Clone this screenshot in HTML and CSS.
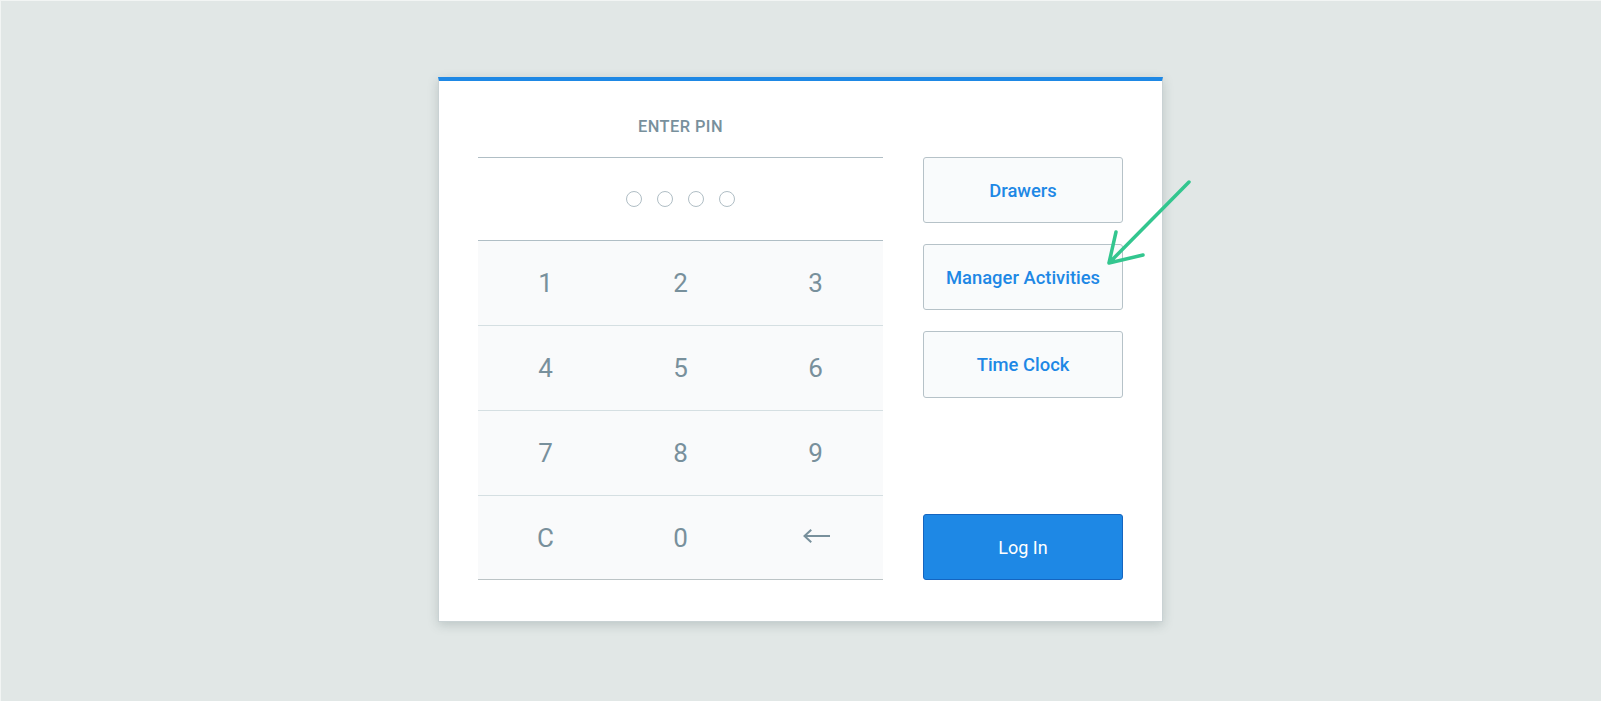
FILE: index.html
```html
<!DOCTYPE html>
<html lang="en">
<head>
<meta charset="utf-8">
<title>Enter PIN</title>
<link rel="stylesheet" href="styles.css">
</head>
<body>
<div class="stage">
  <div class="card">
    <div class="left">
      <div class="title">ENTER PIN</div>
      <div class="pin">
        <span class="dot"></span><span class="dot"></span><span class="dot"></span><span class="dot"></span>
      </div>
      <div class="keypad">
        <div class="row"><div class="key">1</div><div class="key">2</div><div class="key">3</div></div>
        <div class="row"><div class="key">4</div><div class="key">5</div><div class="key">6</div></div>
        <div class="row"><div class="key">7</div><div class="key">8</div><div class="key">9</div></div>
        <div class="row"><div class="key">C</div><div class="key">0</div><div class="key">
          <svg class="back" width="28" height="16" viewBox="0 0 28 16"><path d="M27 8H3M8.5 2.5L2.5 8L8.5 13.5" fill="none" stroke="#78909c" stroke-width="2" stroke-linecap="square"/></svg>
        </div></div>
      </div>
    </div>
    <div class="right">
      <div class="btn">Drawers</div>
      <div class="btn">Manager Activities</div>
      <div class="btn tall">Time Clock</div>
      <div class="login">Log In</div>
    </div>
    <svg class="pointer" width="90" height="90" viewBox="0 0 90 90">
      <path d="M82 3L2 84M9 53L2 84L36 76" fill="none" stroke="#33c68f" stroke-width="3.5" stroke-linecap="round" stroke-linejoin="round"/>
    </svg>
  </div>
</div>
</body>
</html>
```
FILE: styles.css
```css
html, body {
  margin: 0;
  padding: 0;
}
body {
  background: #e1e7e6;
  font-family: Roboto, "Liberation Sans", Arial, sans-serif;
}
.stage {
  width: 1601px;
  height: 701px;
  display: flex;
  justify-content: center;
  padding-top: 77px;
  box-sizing: border-box;
  box-shadow: inset 1px 1px 0 #f2f5f4;
}
.card {
  position: relative;
  width: 725px;
  height: 545px;
  box-sizing: border-box;
  background: #fff;
  border: 1px solid #c9d2d4;
  border-top: 4px solid #1e88e5;
  box-shadow: 0 3px 10px rgba(60, 80, 80, 0.22);
  display: flex;
  gap: 40px;
  padding: 0 39px 0 39px;
}
.left {
  width: 405px;
  display: flex;
  flex-direction: column;
}
.title {
  padding-top: 36px;
  height: 20px;
  line-height: 20px;
  margin-bottom: 20px;
  text-align: center;
  font-size: 16.4px;
  font-weight: 500;
  letter-spacing: 0.45px;
  color: #78909c;
}
.pin {
  border-top: 1px solid #b0bec5;
  height: 82px;
  display: flex;
  justify-content: center;
  align-items: center;
  gap: 15px;
}
.dot {
  width: 16px;
  height: 16px;
  box-sizing: border-box;
  border: 1.5px solid #b0bec5;
  border-radius: 50%;
}
.keypad {
  background: #f9fafb;
  border-top: 1px solid #b0bec5;
  border-bottom: 1px solid #bcc4c6;
}
.row {
  display: flex;
  height: 84px;
  border-bottom: 1px solid #d5dfe2;
}
.row:last-child {
  border-bottom: 0;
  height: 83px;
}
.key {
  flex: 1;
  display: flex;
  justify-content: center;
  align-items: center;
  font-size: 26px;
  color: #78909c;
}
.back {
  display: block;
  margin-top: -4px;
}
.right {
  width: 200px;
  padding-top: 76px;
  padding-bottom: 41px;
  display: flex;
  flex-direction: column;
  gap: 21px;
}
.btn {
  height: 66px;
  box-sizing: border-box;
  border: 1px solid #b6c2c8;
  border-radius: 3px;
  background: #f9fbfc;
  color: #1e88e5;
  font-size: 18.4px;
  font-weight: 500;
  display: flex;
  justify-content: center;
  align-items: center;
}
.btn.tall {
  height: 67px;
}
.login {
  margin-top: auto;
  height: 66px;
  box-sizing: border-box;
  border: 1px solid #1565c0;
  border-radius: 3px;
  background: #1e88e5;
  color: #fff;
  font-size: 18px;
  display: flex;
  justify-content: center;
  align-items: center;
}
.pointer {
  position: absolute;
  left: 668px;
  top: 98px;
}
```
